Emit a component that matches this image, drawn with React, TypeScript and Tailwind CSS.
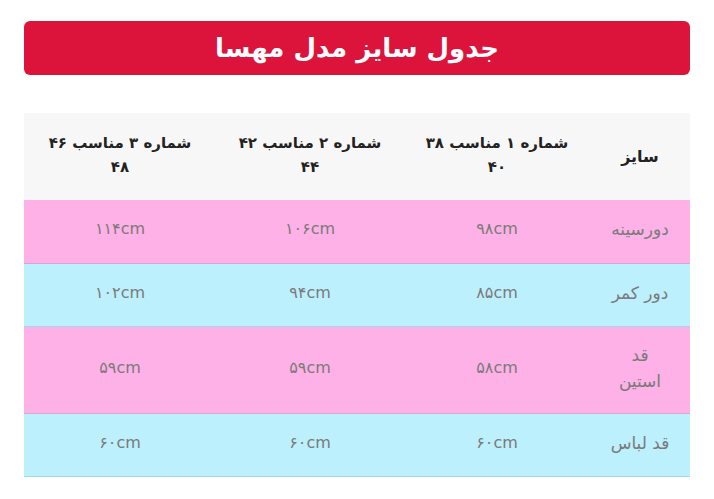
const rows = [
  { label: "دورسینه", values: ["۹۸cm", "۱۰۶cm", "۱۱۴cm"], bg: "bg-[#fdb1e6]", border: "border-[#d9a6cf]", tall: false },
  { label: "دور کمر", values: ["۸۵cm", "۹۴cm", "۱۰۲cm"], bg: "bg-[#bcf0fd]", border: "border-[#a6d8e6]", tall: false },
  { label: "قد استین", values: ["۵۸cm", "۵۹cm", "۵۹cm"], bg: "bg-[#fdb1e6]", border: "border-[#d9a6cf]", tall: true },
  { label: "قد لباس", values: ["۶۰cm", "۶۰cm", "۶۰cm"], bg: "bg-[#bcf0fd]", border: "border-[#a6d8e6]", tall: false },
];

const headers = [
  ["شماره ۱ مناسب ۳۸", "۴۰"],
  ["شماره ۲ مناسب ۴۲", "۴۴"],
  ["شماره ۳ مناسب ۴۶", "۴۸"],
];

export default function App() {
  return (
    <div
      dir="rtl"
      className="w-[714px] h-[499px] bg-white px-6 pt-[21px]"
      style={{ fontFamily: '"DejaVu Sans", "Noto Sans", sans-serif' }}
    >
      <div className="h-[54px] rounded-md bg-[#dc143c] flex items-center justify-center">
        <h1 className="text-[26px] font-bold text-white leading-none">جدول سایز مدل مهسا</h1>
      </div>

      <table className="mt-[38px] w-full table-fixed border-collapse">
        <colgroup>
          <col className="w-[100px]" />
          <col className="w-[186px]" />
          <col className="w-[188px]" />
          <col className="w-[192px]" />
        </colgroup>
        <thead>
          <tr className="h-[87px] bg-[#f7f7f7]">
            <th className="text-[16px] font-bold text-[#222] text-center">سایز</th>
            {headers.map((h, i) => (
              <th key={i} className="text-[15px] font-bold text-[#222] text-center leading-6 pb-1">
                {h[0]}
                <br />
                {h[1]}
              </th>
            ))}
          </tr>
        </thead>
        <tbody>
          {rows.map((r) => (
            <tr key={r.label} className={`${r.bg} border-b ${r.border} ${r.tall ? "h-[87px]" : "h-[63px]"}`}>
              <td className="text-center text-[17px] text-[#7a7a7a] leading-[26px] pb-1">
                {r.tall ? (
                  <>
                    قد
                    <br />
                    استین
                  </>
                ) : (
                  r.label
                )}
              </td>
              {r.values.map((v, i) => (
                <td key={i} className="text-center text-[16px] text-[#7a7a7a] pb-1">
                  {v}
                </td>
              ))}
            </tr>
          ))}
        </tbody>
      </table>
    </div>
  );
}
